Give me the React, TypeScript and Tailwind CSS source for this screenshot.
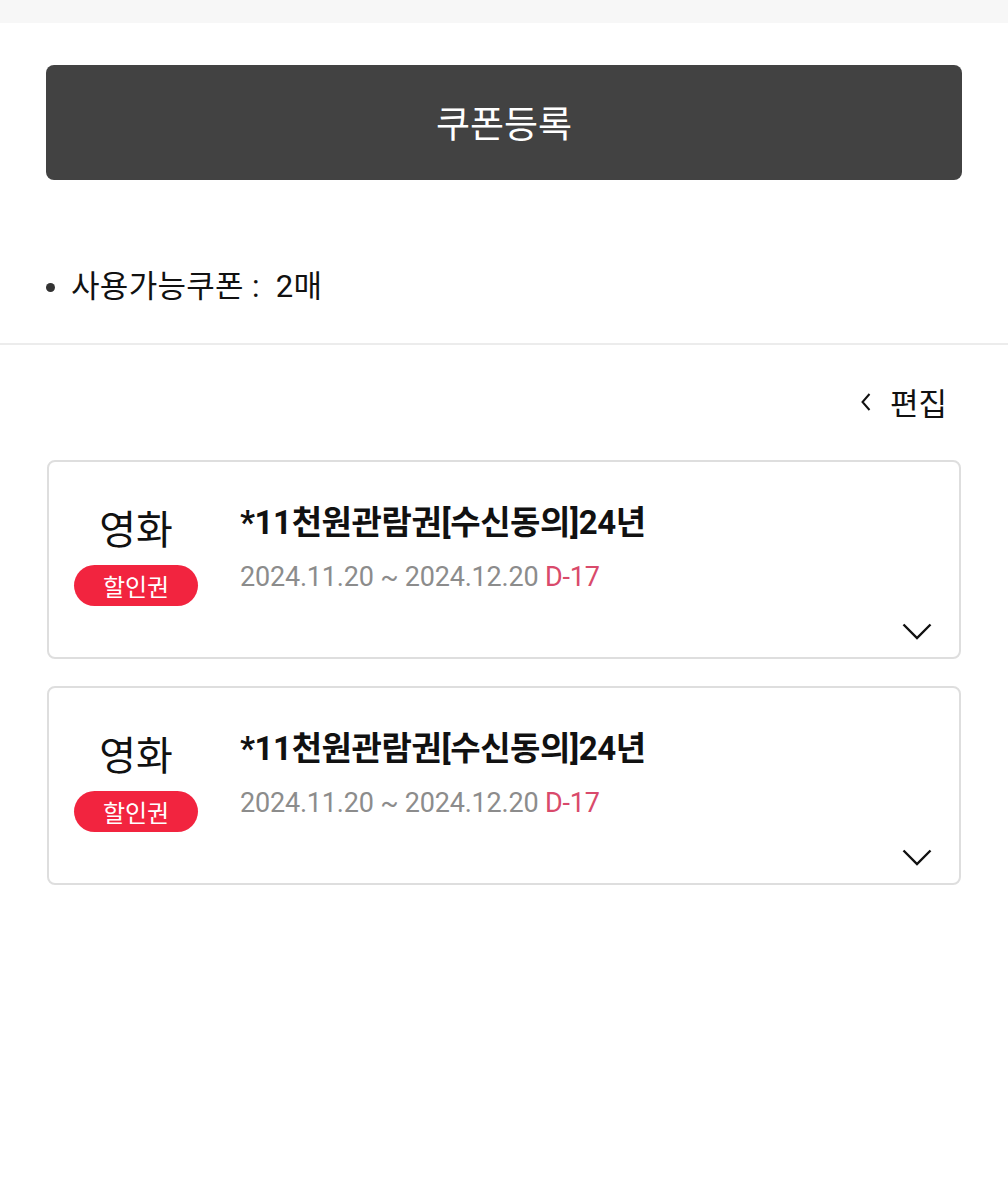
const font = "font-['Roboto','Noto_Sans_CJK_KR',sans-serif]"

function Chevron() {
  return (
    <svg width="30" height="17" viewBox="0 0 30 17" fill="none">
      <path d="M1.5 1.5 L15 15 L28.5 1.5" stroke="#111" strokeWidth="2.4" />
    </svg>
  )
}

function CouponCard() {
  return (
    <div className="flex h-[199px] rounded-[8px] border-2 border-[#dedede] bg-white">
      <div className="flex w-[152px] flex-col items-center pl-[22px] pt-[41px]">
        <div className="h-[48px] text-[40px] leading-[48px] text-[#111] font-['Noto_Sans_CJK_KR',sans-serif]">
          영화
        </div>
        <div className="mt-[14px] flex h-[41px] w-[124px] items-center justify-center rounded-full bg-[#f2243f] text-[24px] text-white font-['Noto_Sans_CJK_KR',sans-serif]">
          할인권
        </div>
      </div>
      <div className="flex flex-col pl-[39px] pt-[41px]">
        <div className="h-[40px] text-[33px] font-bold leading-[40px] tracking-[-0.4px] text-[#111]">
          *11천원관람권[수신동의]24년
        </div>
        <div className="mt-[18px] h-[32px] text-[27px] leading-[32px] tracking-[-0.2px] text-[#8c8c8c]">
          2024.11.20 ~ 2024.12.20 <span className="text-[#d94a6b]">D-17</span>
        </div>
      </div>
      <div className="ml-auto mb-[17px] mr-[27px] self-end">
        <Chevron />
      </div>
    </div>
  )
}

export default function App() {
  return (
    <div className={`min-h-[1200px] w-full bg-white ${font}`}>
      <div className="h-[23px] bg-[#f7f7f7]" />

      <div className="px-[46px] pt-[42px]">
        <button className="flex h-[115px] w-full items-center justify-center rounded-[8px] bg-[#424242] text-[37px] text-white font-['Noto_Sans_CJK_KR',sans-serif]">
          쿠폰등록
        </button>

        <div className="mt-[87px] flex h-[40px] items-center text-[31px] leading-[40px] tracking-[0.3px] text-[#111]">
          <span className="mr-[16px] h-[9px] w-[9px] rounded-full bg-[#333]" />
          <span>사용가능쿠폰&nbsp;:&nbsp; 2매</span>
        </div>
      </div>

      <div className="mt-[36px] h-[2px] bg-[#ececec]" />

      <div className="px-[46px]">
        <div className="mt-[37px] flex h-[40px] items-center justify-end pr-[15px] text-[31px] leading-[40px] text-[#111]">
          <svg width="12" height="20" viewBox="0 0 12 20" fill="none" className="mr-[18px]">
            <path d="M9.5 2 L2.5 10 L9.5 18" stroke="#111" strokeWidth="2" />
          </svg>
          <span className="font-['Noto_Sans_CJK_KR',sans-serif]">편집</span>
        </div>

        <div className="mt-[38px] flex flex-col gap-[27px] px-px">
          <CouponCard />
          <CouponCard />
        </div>
      </div>
    </div>
  )
}
